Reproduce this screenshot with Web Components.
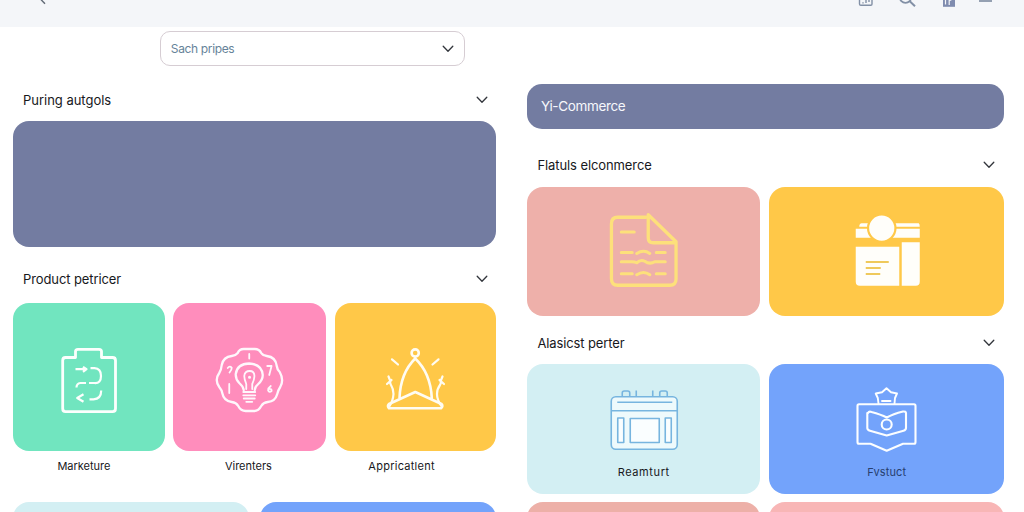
<!DOCTYPE html>
<html lang="en">
<head>
<meta charset="utf-8">
<title>Commerce catalogue</title>
<style>
    body {
        margin: 0;
        width: 1024px;
        height: 512px;
        overflow: hidden;
        background: #fff;
        color: #17181c;
        font-family: Inter, 'Liberation Sans', sans-serif;
    }
</style>
</head>
<body>
<shop-page>
    <top-bar slot="bar"></top-bar>

    <shop-column slot="left">
        <search-select>Sach pripes</search-select>
        <section-head style="--h: 55px; --pt: 13px; --track: -.02px">Puring autgols</section-head>
        <color-card style="--h: 126px; --bg: #737ca1"></color-card>
        <section-head style="--h: 56px; --pt: 9px; --track: -.1px">Product petricer</section-head>
        <card-row style="--cols: 151.5px 153px 161px; --gap: 8.7px">
            <color-card icon="clipboard" label="Marketure" outside style="--h: 148px; --bg: #71e5bf; --shift: 10px"></color-card>
            <color-card icon="bulb" label="Virenters" outside style="--h: 148px; --bg: #ff8dbc; --shift: 3px"></color-card>
            <color-card icon="crown" label="Appricatlent" outside style="--h: 148px; --bg: #ffc848; --shift: 28px; --track: .25px"></color-card>
        </card-row>
        <card-row style="--cols: 236px 236px; --gap: 11px; --mt: 20.5px">
            <color-card style="--h: 120px; --bg: #d3eff3"></color-card>
            <color-card style="--h: 120px; --bg: #73a3fb"></color-card>
        </card-row>
    </shop-column>

    <shop-column slot="right">
        <title-banner>Yi-Commerce</title-banner>
        <section-head style="--h: 58.5px; --pt: 14.5px; --px: 10.5px; --track: -.1px">Flatuls elconmerce</section-head>
        <card-row style="--cols: 233.5px 235.3px; --gap: 8.6px">
            <color-card icon="note" style="--h: 128.5px; --bg: #eeb0aa"></color-card>
            <color-card icon="store" style="--h: 128.5px; --bg: #ffc848"></color-card>
        </card-row>
        <section-head style="--h: 48.5px; --pt: 5px; --px: 10.5px; --track: -.12px">Alasicst perter</section-head>
        <card-row style="--cols: 233.5px 235.3px; --gap: 8.6px">
            <color-card icon="calendar" label="Reamturt" style="--h: 129.5px; --bg: #d3eff3; --track: .6px"></color-card>
            <color-card icon="badge" label="Fvstuct" style="--h: 129.5px; --bg: #73a3fb; --ink: #27406f; --track: .1px"></color-card>
        </card-row>
        <card-row style="--cols: 233.5px 235.3px; --gap: 8.6px; --mt: 8.5px">
            <color-card style="--h: 120px; --bg: #edb0a8"></color-card>
            <color-card style="--h: 120px; --bg: #f8b6b6"></color-card>
        </card-row>
    </shop-column>
</shop-page>

<script>
const ICONS = {
    note: `<svg width="110" height="100" viewBox="-.75 2.25 110 100" fill="none" stroke="#fde07b" stroke-width="3.3" stroke-linecap="round" stroke-linejoin="round">
        <path d="M56 17.5H28Q21.7 17.5 21.7 24V79Q21.7 85.5 28 85.5H80Q86.3 85.5 86.3 79V42L58.5 15V38Q58.5 43 63.5 43H86"/>
        <path stroke-width="3" d="M31.5 32.3H44.5M31.5 52.7H42.5M66.5 52.7H75.5M47 53.7Q54 49.5 60 53.7M31.5 62H42Q45 62 47 63Q51 59.5 55 61.5Q60 65 65 62H75.5M31.5 74H42.5M66.5 74H75.5M47 75Q54 70.5 60 75"/>
    </svg>`,
    store: `<svg width="100" height="100" viewBox="-2.75 2.25 100 100" fill="#fffefa">
        <path d="M22 23.5H79Q80 24 80 27H19.5Q19.5 23.5 22 23.5ZM16 29H80V38H16ZM16 47H59.5V86H20Q16 86 16 82ZM62 42.5H80V82Q80 86 76 86H62Z"/>
        <circle cx="42" cy="28.3" r="13.7" stroke="#ffc848" stroke-width="2.2"/>
        <path d="M26 62.2H49M26 68.2H41M26 74.2H40.5" stroke="#efc95c" stroke-width="2.1"/>
    </svg>`,
    clipboard: `<svg width="100" height="100" viewBox="-.5 -3 100 100" fill="none" stroke="#fcfffd" stroke-width="2.8" stroke-linejoin="round">
        <path d="M26 27.5H36V21.5Q36 19.3 38.5 19.3H59.5Q62 19.3 62 21.5V27.5H73Q76 27.5 76 30.5V78.5Q76 81.7 73 81.7H26Q23.2 81.7 23.2 78.5V30.5Q23.2 27.5 26 27.5Z"/>
        <path stroke-width="2.2" d="M36 39.2H47M43.5 36.8L47 39.2L43.5 41.8M51 38.2H55Q61.5 38.5 61.5 46T55 53H49.5M37 57.5Q37 53.5 41 53H46.5M44 64.3L37.7 68L44 71.8M50 69.3H54Q61.7 69 61.7 60.5"/>
    </svg>`,
    bulb: `<svg width="100" height="100" viewBox=".25 -3 100 100" fill="none" stroke="#fff7fc" stroke-width="2.3" stroke-linecap="round" stroke-linejoin="round">
        <path d="M38 23Q39.5 19 44 19H55Q59.5 19 61.5 23Q63 25.5 67 26Q76 27 77 36Q77.4 39.5 80 42Q84.5 50 80.5 57Q78.5 60 77.5 64Q75.5 71.5 68 72Q63.5 72.5 61.5 76Q59 81 54 81H46Q41 81 38.5 76Q36.5 72.5 32 72Q24 71 22.5 63Q22 60 19.5 57Q14.5 50 19.5 43Q21.5 40 22 35Q23.5 27 32 26Q36 25.5 38 23Z"/>
        <path d="M44 60Q43.5 56.5 39.5 53Q35.7 49 36 44Q37.5 33.7 49.5 33.5Q62 34 63 45Q63 50 58.5 54Q55 57 55 60"/>
        <path stroke-width="1.8" d="M46.5 59V54Q44.5 49 44.5 46Q45 41 50 41Q54.5 41 54.7 46Q54.5 50 52.5 54V59M43.5 62H55.5M43.5 65.3H55.5M44 68.5H55M46.5 71.8H52.5M49.5 24V28.5M29.5 54V63"/>
        <circle cx="49.8" cy="47.3" r=".8" stroke-width="1.5"/>
        <path stroke-width="1.8" d="M28 38Q30 35.5 32 37.8Q32 40 29.8 42.5M67.5 36H71.8L69.5 45M71 56Q68.2 58 68.4 60.5Q69.7 62.8 71.8 61Q72.2 58.3 69 59"/>
    </svg>`,
    crown: `<svg width="120" height="100" viewBox="1 -3 120 100" fill="none" stroke="#fffcf2" stroke-width="2.6" stroke-linecap="round" stroke-linejoin="round">
        <circle cx="60.2" cy="23" r="3.6"/>
        <path d="M60.2 28.5Q45.5 43 44.5 68M60.2 28.5Q75.5 43 76.8 68M34 78.3H86Q88.5 76 86.5 74L60.3 62L34 74Q32 76 34 78.3Z"/>
        <path stroke-width="2.2" d="M34.5 76Q38 71 38.5 64Q38.5 59 36 55Q34 51.5 36.5 50M32 54L35.3 51L33.5 46.5M86.5 76Q82 70 82 64Q82 59 85 55Q87 51.5 84.5 50M89 54L85.7 51L87.5 46.5M37 29.3L43 34.5M83.5 29.3L77.5 34.5"/>
    </svg>`,
    calendar: `<svg width="110" height="85" viewBox="-1.25 0 110 85" fill="none" stroke="#77b5df" stroke-width="1.6" stroke-linejoin="round">
        <rect x="21" y="21.7" width="66" height="52.5" rx="4.5" fill="#eefafc"/>
        <path d="M32 21.5V18Q32 16 34 16H37.5Q39.5 16 39.5 18V21.5M69.5 21.5V18Q69.5 16 71.5 16H75Q77 16 77 18V21.5M46 15.5V21.5M62.5 15.5V21.5M27 27.2H82M21.5 35.7H87"/>
        <path d="M27.5 43H33.5V67.5H27.5ZM40 43.5H69V67.5H40ZM75 43H81V67.5H75Z" fill="#fafeff"/>
    </svg>`,
    badge: `<svg width="110" height="85" viewBox="-3 0 110 85" fill="none" stroke="#fcfeff" stroke-width="2.1" stroke-linecap="round" stroke-linejoin="round">
        <path d="M24 29.2H79Q80.5 29.2 80.5 31V67Q80.5 68.8 79 68.8H68L51.7 75.8L35.5 68.8H24Q22.5 68.8 22.5 67V31Q22.5 29.2 24 29.2Z"/>
        <path stroke-width="1.9" d="M43.5 28.5L42.8 23L40.7 18.5L47 17.3L51.5 13.3L56 17.3L62 18.5L60 23L59.5 28.5M47 26H55.5"/>
        <path d="M33 38Q34 36 36.5 37Q46 39.5 51.7 42.5Q58 39 68 36.5Q71 36.2 71 38V53Q71 55 68.5 55.7L51.7 60.5L35 55.7Q32.3 55 32.3 53V38Z"/>
        <circle cx="51.7" cy="49.5" r="5"/>
    </svg>`,
    chevron: `<svg width="12" height="8" viewBox="0 0 12 8" fill="none" stroke="#33363c" stroke-width="1.3" stroke-linecap="round" stroke-linejoin="round"><path d="M1.2 1.3L6 6.3L10.8 1.3"/></svg>`
};

// Shared base: subclasses only provide a template
class BaseElement extends HTMLElement {
    connectedCallback() {
        if (!this.shadowRoot) {
            this.attachShadow({ mode: 'open' });
        }
        this.shadowRoot.innerHTML = this.template();
    }
}

class ShopPage extends BaseElement {
    template() {
        return `
            <style>
                :host { display: block; height: 512px; overflow: hidden; }
                .columns {
                    display: grid;
                    grid-template-columns: 483px 477.4px;
                    column-gap: 30.8px;
                    padding-left: 13.2px;
                    align-items: start;
                }
                ::slotted([slot="left"]) { padding-top: 4.5px; }
                ::slotted([slot="right"]) { padding-top: 57.2px; }
            </style>
            <slot name="bar"></slot>
            <div class="columns"><slot name="left"></slot><slot name="right"></slot></div>
        `;
    }
}

class ShopColumn extends BaseElement {
    template() {
        return `
            <style>:host { display: flex; flex-direction: column; }</style>
            <slot></slot>
        `;
    }
}

class TopBar extends BaseElement {
    template() {
        return `
            <style>
                :host {
                    display: flex;
                    justify-content: space-between;
                    box-sizing: border-box;
                    height: 26.8px;
                    padding: 0 31px 0 38px;
                    background: #f4f6f9;
                }
                .tools { display: flex; }
                .tools svg + svg { margin-left: 25px; }
                .tools svg:last-child { margin-left: 22.5px; }
                svg { display: block; fill: none; stroke: #8290a6; stroke-width: 1.4; }
            </style>
            <svg width="10" height="8" viewBox="0 0 10 8"><path stroke="#606975" d="M1.5-2L7 3.8"/></svg>
            <div class="tools">
                <svg width="16" height="9" viewBox="0 0 16 9"><path d="M1.5-5V4Q1.5 5.3 2.8 5.3H12.8Q14 5.3 14 4V-5M8-1V3M5 2.3V3.5M11 0V2"/></svg>
                <svg width="18" height="9" viewBox="0 0 18 9"><circle cx="6.5" cy="-3" r="5.8" stroke-width="1.8"/><path stroke-width="2" d="M10.5 1L16 6.2"/></svg>
                <svg width="14" height="9" viewBox="0 0 14 9"><path fill="#7f8caf" stroke="none" d="M1-5H13V6.8H1Z"/><path stroke="#f4f6f9" stroke-width="1.2" d="M3.5 0V4.5M9.3.2H7.2V5"/></svg>
                <svg width="15" height="9" viewBox="0 0 15 9"><path stroke-width="1.7" d="M1 1H14"/></svg>
            </div>
        `;
    }
}

class SearchSelect extends BaseElement {
    template() {
        return `
            <style>
                :host {
                    display: flex;
                    align-items: center;
                    justify-content: space-between;
                    box-sizing: border-box;
                    width: 305.5px;
                    height: 34.5px;
                    margin-left: 146.6px;
                    padding: 0 10.5px 0 10px;
                    border: 1px solid #d6cdd3;
                    border-radius: 10px;
                    font-size: 12px;
                    color: #668399;
                    letter-spacing: -.35px;
                }
            </style>
            <slot></slot>${ICONS.chevron}
        `;
    }
}

class SectionHead extends BaseElement {
    template() {
        return `
            <style>
                :host {
                    display: flex;
                    align-items: center;
                    justify-content: space-between;
                    box-sizing: border-box;
                    height: var(--h);
                    padding: var(--pt, 12px) 8.5px 0 var(--px, 9.8px);
                    font-size: 13px;
                    letter-spacing: var(--track, 0);
                }
                :host([style*="10.5px"]) { padding-right: 9.5px; }
            </style>
            <slot></slot>${ICONS.chevron}
        `;
    }
}

class TitleBanner extends BaseElement {
    template() {
        return `
            <style>
                :host {
                    display: flex;
                    align-items: center;
                    box-sizing: border-box;
                    height: 45px;
                    padding: 0 14px 1px;
                    border-radius: 15px;
                    background: #737ca1;
                    color: #f7f8fc;
                    font-size: 13.5px;
                    letter-spacing: -.35px;
                }
            </style>
            <slot></slot>
        `;
    }
}

class CardRow extends BaseElement {
    template() {
        return `
            <style>
                :host {
                    display: grid;
                    grid-template-columns: var(--cols);
                    column-gap: var(--gap);
                    margin-top: var(--mt, 0);
                }
            </style>
            <slot></slot>
        `;
    }
}

class ColorCard extends BaseElement {
    template() {
        const label = this.getAttribute('label') || '';
        const icon = ICONS[this.getAttribute('icon')] || '';
        const outside = this.hasAttribute('outside');
        const text = label ? `<div class="label">${label}</div>` : '';

        return `
            <style>
                :host { display: block; }
                .card {
                    display: flex;
                    flex-direction: column;
                    align-items: center;
                    justify-content: ${label && !outside ? 'flex-start' : 'center'};
                    box-sizing: border-box;
                    height: var(--h);
                    padding-top: ${label && !outside ? '10.5px' : '0'};
                    border-radius: 16px;
                    background: var(--bg);
                }
                svg { display: block; flex: none; }
                .label {
                    height: 31px;
                    padding-right: var(--shift, 0);
                    line-height: 31px;
                    text-align: center;
                    font-size: 11px;
                    letter-spacing: var(--track, 0);
                    color: var(--ink, #17181c);
                }
                .card .label { height: 22px; line-height: 24px; }
            </style>
            <div class="card">${icon}${outside ? '' : text}</div>
            ${outside ? text : ''}
        `;
    }
}

customElements.define('shop-page', ShopPage);
customElements.define('shop-column', ShopColumn);
customElements.define('top-bar', TopBar);
customElements.define('search-select', SearchSelect);
customElements.define('section-head', SectionHead);
customElements.define('title-banner', TitleBanner);
customElements.define('card-row', CardRow);
customElements.define('color-card', ColorCard);
</script>
</body>
</html>
